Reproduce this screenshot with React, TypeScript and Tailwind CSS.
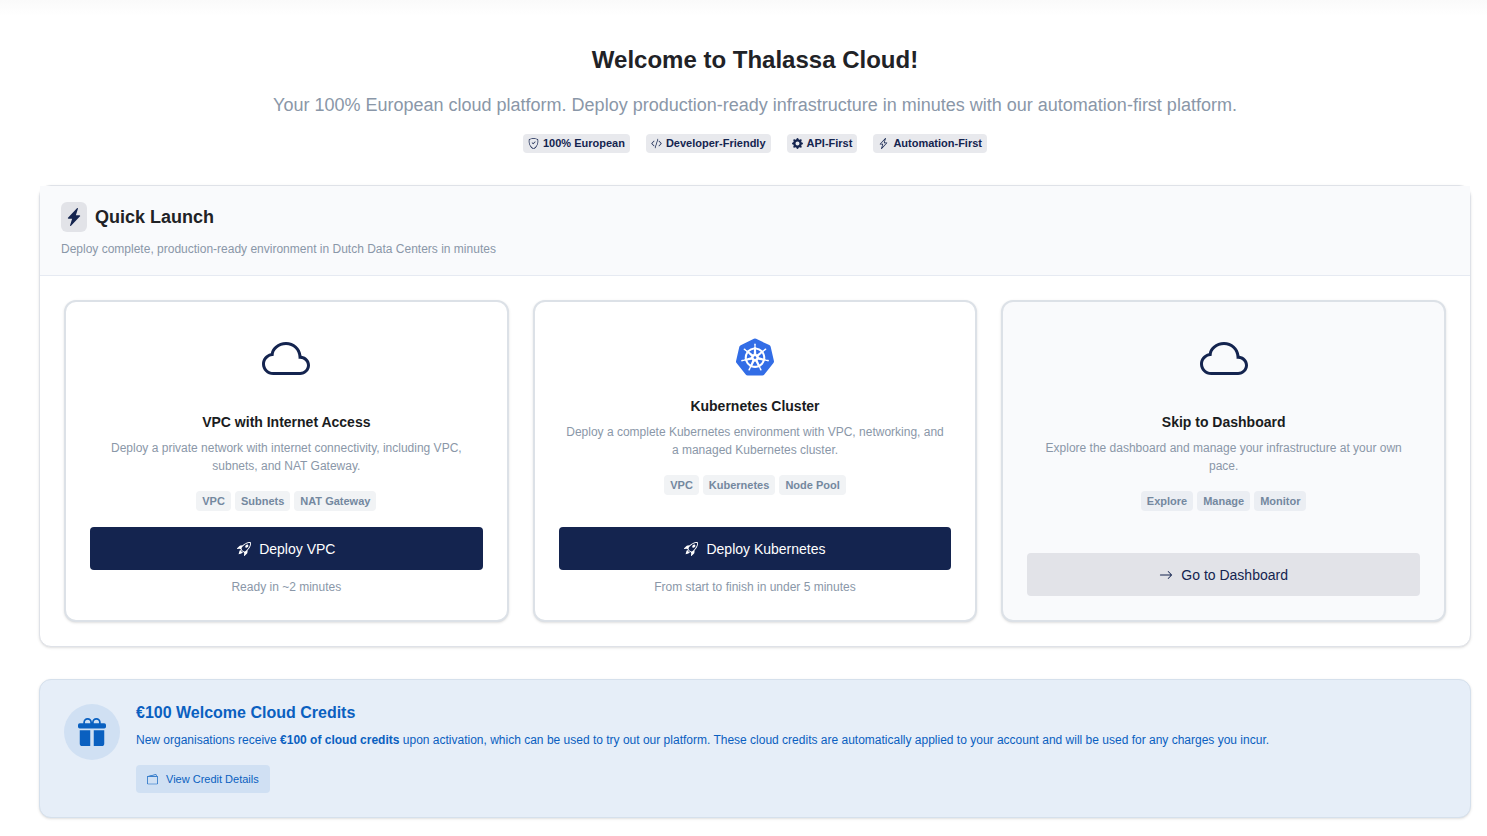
import React from "react"
import {
  BsArrowRight,
  BsCloud,
  BsCodeSlash,
  BsGearFill,
  BsGiftFill,
  BsLightningCharge,
  BsLightningChargeFill,
  BsRocketTakeoff,
  BsShieldCheck,
  BsWallet2,
} from "react-icons/bs"
import { SiKubernetes } from "react-icons/si"

const features = [
  { label: "100% European", icon: BsShieldCheck },
  { label: "Developer-Friendly", icon: BsCodeSlash },
  { label: "API-First", icon: BsGearFill },
  { label: "Automation-First", icon: BsLightningCharge },
]

type LaunchCardProps = {
  icon: React.ReactNode
  title: string
  description: string
  tags: string[]
  muted?: boolean
  children: React.ReactNode
}

const LaunchCard = ({ icon, title, description, tags, muted, children }: LaunchCardProps) => {
  return (
    <article
      className={`flex flex-col rounded-xl border-2 border-[#dce1e7] p-6 text-center shadow-sm ${
        muted ? "bg-[#f9fafc]" : "bg-white"
      }`}
    >
      <div className="flex justify-center">{icon}</div>
      <h3 className="text-sm font-bold text-[#1a1c21]">{title}</h3>
      <p className="mt-[7px] px-1 text-xs leading-[18px] text-[#8a97a8]">{description}</p>
      <ul className="mt-4 flex flex-wrap justify-center gap-1">
        {tags.map((tag) => (
          <li
            key={tag}
            className={`rounded px-1.5 text-[11px] leading-5 font-bold text-[#74889f] ${
              muted ? "bg-[#ebeef3]" : "bg-[#f1f3f5]"
            }`}
          >
            {tag}
          </li>
        ))}
      </ul>
      <div className="mt-auto pt-4">{children}</div>
    </article>
  )
}

const App = () => {
  return (
    <main className="min-h-screen bg-linear-to-b from-[#fafafa] to-white to-[16px] pt-11 pr-4 pb-4 pl-[39px] font-['Liberation_Sans',Arial,sans-serif]">
      <header className="text-center">
        <h1 className="text-2xl leading-8 font-bold text-[#212226]">Welcome to Thalassa Cloud!</h1>
        <p className="mt-4 text-lg leading-[26px] text-[#8a97a8]">
          Your 100% European cloud platform. Deploy production-ready infrastructure in minutes with our automation-first
          platform.
        </p>
        <ul className="mt-4 flex flex-wrap justify-center gap-4">
          {features.map(({ label, icon: Icon }) => (
            <li
              key={label}
              className="flex items-center gap-1 rounded bg-[#e8e9ed] px-[5px] text-[11px] leading-[19px] font-bold text-[#14244f]"
            >
              <Icon size={11} />
              {label}
            </li>
          ))}
        </ul>
      </header>

      <section className="mt-8 rounded-xl border border-[#dfe2e8] bg-white shadow-sm">
        <div className="border-b border-[#e6eaf2] bg-[#f9fafc] px-[21px] pt-4 pb-[17px]">
          <div className="flex items-center gap-2">
            <span className="flex h-[30px] w-[26px] items-center justify-center rounded-md bg-[#e2e3e8] text-[#14244f]">
              <BsLightningChargeFill size={18} />
            </span>
            <h2 className="text-lg font-bold text-[#212226]">Quick Launch</h2>
          </div>
          <p className="mt-2 text-xs leading-[18px] text-[#8a97a8]">
            Deploy complete, production-ready environment in Dutch Data Centers in minutes
          </p>
        </div>

        <div className="grid grid-cols-1 gap-6 p-6 md:grid-cols-3">
          <LaunchCard
            icon={<BsCloud size={48} className="mt-[10px] mb-7 text-[#14244f]" />}
            title="VPC with Internet Access"
            description="Deploy a private network with internet connectivity, including VPC, subnets, and NAT Gateway."
            tags={["VPC", "Subnets", "NAT Gateway"]}
          >
            <button className="flex h-[43px] w-full items-center justify-center gap-2 rounded bg-[#14244f] text-sm text-white">
              <BsRocketTakeoff size={14} />
              Deploy VPC
            </button>
            <p className="mt-2 text-xs leading-[18px] text-[#8a97a8]">Ready in ~2 minutes</p>
          </LaunchCard>

          <LaunchCard
            icon={<SiKubernetes size={38} className="mt-3 mb-5 text-[#326de6]" />}
            title="Kubernetes Cluster"
            description="Deploy a complete Kubernetes environment with VPC, networking, and a managed Kubernetes cluster."
            tags={["VPC", "Kubernetes", "Node Pool"]}
          >
            <button className="flex h-[43px] w-full items-center justify-center gap-2 rounded bg-[#14244f] text-sm text-white">
              <BsRocketTakeoff size={14} />
              Deploy Kubernetes
            </button>
            <p className="mt-2 text-xs leading-[18px] text-[#8a97a8]">From start to finish in under 5 minutes</p>
          </LaunchCard>

          <LaunchCard
            muted
            icon={<BsCloud size={48} className="mt-[10px] mb-7 text-[#14244f]" />}
            title="Skip to Dashboard"
            description="Explore the dashboard and manage your infrastructure at your own pace."
            tags={["Explore", "Manage", "Monitor"]}
          >
            <button className="flex h-[43px] w-full items-center justify-center gap-2 rounded bg-[#e2e3e8] text-sm text-[#14244f]">
              <BsArrowRight size={14} />
              Go to Dashboard
            </button>
          </LaunchCard>
        </div>
      </section>

      <section className="mt-8 flex gap-4 rounded-xl border border-[#d5e0ec] bg-[#e6eef8] p-6 text-[#0a60c0] shadow-sm">
        <div className="flex size-14 shrink-0 items-center justify-center rounded-full bg-[#d0e0f3]">
          <BsGiftFill size={28} />
        </div>
        <div>
          <h2 className="text-base leading-[18px] font-bold">€100 Welcome Cloud Credits</h2>
          <p className="mt-[9px] text-xs leading-[18px]">
            New organisations receive <strong>€100 of cloud credits</strong> upon activation, which can be used to try
            out our platform. These cloud credits are automatically applied to your account and will be used for any
            charges you incur.
          </p>
          <button className="mt-4 flex h-7 items-center gap-2 rounded bg-[#d0e0f3] px-[11px] text-[11px]">
            <BsWallet2 size={11} />
            View Credit Details
          </button>
        </div>
      </section>
    </main>
  )
}

export default App
